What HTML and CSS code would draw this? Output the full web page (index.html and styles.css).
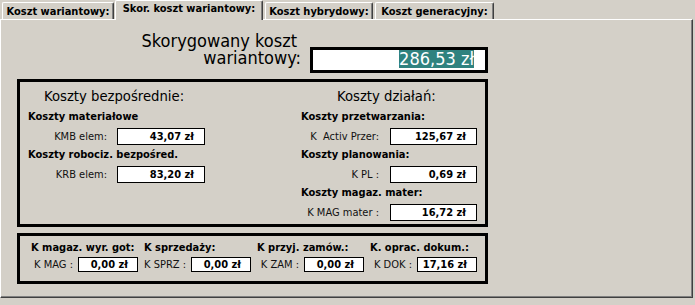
FILE: index.html
```html
<!DOCTYPE html>
<html lang="pl">
<head>
<meta charset="utf-8">
<title>Skor. koszt wariantowy</title>
<link rel="stylesheet" href="styles.css">
</head>
<body>
<div class="window">
  <div class="tabs">
    <div class="tab t1">Koszt wariantowy:</div>
    <div class="tab t2 active">Skor. koszt wariantowy:</div>
    <div class="tab t3">Koszt hybrydowy:</div>
    <div class="tab t4">Koszt generacyjny:</div>
  </div>
  <div class="panel">
    <div class="summary">
      <div class="summary-title">
        <div class="line1">Skorygowany koszt</div>
        <div class="line2">wariantowy:</div>
      </div>
      <div class="summary-box"><span class="sel">286,53 zł</span></div>
    </div>

    <div class="main-box">
      <div class="col col-left">
        <div class="col-title">Koszty bezpośrednie:</div>
        <div class="sub">Koszty materiałowe</div>
        <div class="field"><span class="lbl">KMB elem:</span><span class="val">43,07 zł</span></div>
        <div class="sub">Koszty robociz. bezpośred.</div>
        <div class="field"><span class="lbl">KRB elem:</span><span class="val">83,20 zł</span></div>
      </div>
      <div class="col col-right">
        <div class="col-title">Koszty działań:</div>
        <div class="sub">Koszty przetwarzania:</div>
        <div class="field"><span class="lbl">K  Activ Przer:</span><span class="val">125,67 zł</span></div>
        <div class="sub">Koszty planowania:</div>
        <div class="field"><span class="lbl">K PL :</span><span class="val">0,69 zł</span></div>
        <div class="sub">Koszty magaz. mater:</div>
        <div class="field"><span class="lbl">K MAG mater :</span><span class="val">16,72 zł</span></div>
      </div>
    </div>

    <div class="bottom-box">
      <div class="cell">
        <div class="sub">K magaz. wyr. got:</div>
        <div class="bfield"><span class="blbl">K MAG :</span><span class="bval">0,00 zł</span></div>
      </div>
      <div class="cell">
        <div class="sub">K sprzedaży:</div>
        <div class="bfield"><span class="blbl">K SPRZ :</span><span class="bval">0,00 zł</span></div>
      </div>
      <div class="cell">
        <div class="sub">K przyj. zamów.:</div>
        <div class="bfield"><span class="blbl">K ZAM :</span><span class="bval">0,00 zł</span></div>
      </div>
      <div class="cell">
        <div class="sub">K. oprac. dokum.:</div>
        <div class="bfield"><span class="blbl">K DOK :</span><span class="bval">17,16 zł</span></div>
      </div>
    </div>
  </div>
</div>
</body>
</html>
```
FILE: styles.css
```css
* { box-sizing: border-box; }

body {
  margin: 0;
  background: #d4d0c8;
  font-family: "DejaVu Sans Condensed", "DejaVu Sans", sans-serif;
  font-size: 11px;
  color: #000;
}

.window {
  width: 695px;
  height: 305px;
}

/* ---------- tabs ---------- */
.tabs {
  display: flex;
  align-items: flex-end;
  height: 19px;
}

.tab {
  height: 17px;
  padding-top: 2px;
  line-height: 13px;
  font-weight: bold;
  text-align: center;
  white-space: nowrap;
  border-top: 1px solid #ffffff;
  border-left: 1px solid #ffffff;
  border-right: 1px solid #404040;
  box-shadow: inset -1px 0 0 #808080;
  border-top-left-radius: 2px;
  border-top-right-radius: 2px;
}

.t1 { margin-left: 2px; width: 112px; }
.t2 { margin-left: 1px; width: 148px; }
.t3 { margin-left: 2px; width: 108px; }
.t4 { margin-left: 2px; width: 119px; }

.tab.active {
  height: 20px;
  margin-bottom: -1px;
  padding-top: 1px;
  position: relative;
  z-index: 1;
  background: #d4d0c8;
}

/* ---------- panel ---------- */
.panel {
  width: 693px;
  height: 279px;
  border-top: 1px solid #ffffff;
  border-left: 1px solid #ffffff;
  border-right: 1px solid #404040;
  border-bottom: 1px solid #404040;
  box-shadow: inset -1px -1px 0 #808080;
  padding-left: 16px;
}

.summary {
  display: flex;
  align-items: flex-start;
  height: 53px;
  margin-left: -16px;
}

.summary-title {
  width: 300px;
  padding-top: 12px;
  font-size: 18px;
  line-height: 17px;
  text-align: right;
  color: #000;
  white-space: nowrap;
}

.summary-title .line1 { margin-right: 4px; }

.summary-box {
  margin-left: 9px;
  margin-top: 27px;
  width: 178px;
  height: 26px;
  border: 3px solid #000;
  background: #ffffff;
  text-align: right;
  padding-right: 11px;
  font-size: 18px;
  line-height: 18px;
  white-space: nowrap;
}

.sel {
  display: inline-block;
  background: #2f827f;
  color: #ffffff;
}

/* ---------- main box ---------- */
.main-box {
  margin-top: 6px;
  width: 471px;
  height: 148px;
  border: 3px solid #000;
  display: grid;
  grid-template-columns: 273px 1fr;
  padding: 5.5px 0 0 8px;
}

.col-title {
  font-size: 14.7px;
  line-height: 15px;
  margin-bottom: 7.5px;
  white-space: nowrap;
}

.col-left .col-title { margin-left: 16px; }
.col-right .col-title { margin-left: 36px; }

.sub {
  font-weight: bold;
  line-height: 13px;
  white-space: nowrap;
}

.main-box .sub { margin-bottom: 4.5px; }

.field {
  display: flex;
  align-items: center;
  margin-bottom: 3.5px;
}

.lbl {
  text-align: right;
  white-space: pre;
  color: #111;
}

.col-left .lbl { width: 79px; margin-right: 10px; }
.col-right .lbl { width: 78px; margin-right: 11px; }

.val {
  height: 17px;
  border: 1px solid #000;
  background: #ffffff;
  font-weight: bold;
  line-height: 15px;
  text-align: right;
  padding-right: 10px;
}

.col-left .val { width: 88px; }
.col-right .val { width: 87px; }

/* ---------- bottom box ---------- */
.bottom-box {
  margin-top: 6px;
  width: 471px;
  height: 51px;
  border: 3px solid #000;
  display: grid;
  grid-template-columns: repeat(4, 107px);
  column-gap: 6px;
  padding: 5px 0 0 11px;
}

.bottom-box .sub { margin-bottom: 3px; }

.bfield {
  display: flex;
  justify-content: flex-end;
  align-items: center;
}

.blbl {
  margin-right: 5px;
  white-space: nowrap;
  color: #111;
}

.bval {
  width: 60px;
  height: 15px;
  border: 1px solid #000;
  background: #ffffff;
  font-weight: bold;
  line-height: 13px;
  text-align: right;
  padding-right: 9px;
}
```
